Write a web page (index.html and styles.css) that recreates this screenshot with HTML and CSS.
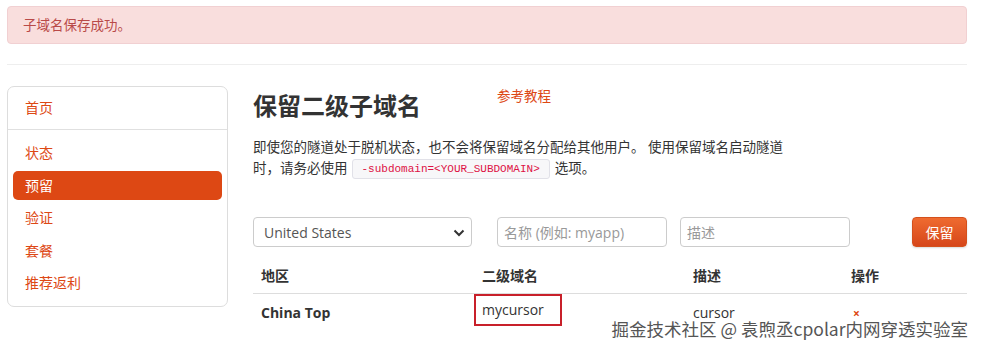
FILE: index.html
```html
<!DOCTYPE html>
<html lang="zh-CN">
<head>
  <meta charset="UTF-8" />
  <meta name="viewport" content="width=device-width, initial-scale=1.0"/>
  <title>保留二级子域名</title>
  <link rel="stylesheet" href="styles.css">
</head>
<body>
  <div class="container">
    <div class="alert">子域名保存成功。</div>
    <hr class="sep">

    <div class="layout">
      <ul class="sidenav">
        <li><a href="#">首页</a></li>
        <li class="divider"></li>
        <li><a href="#">状态</a></li>
        <li class="active"><a href="#">预留</a></li>
        <li><a href="#">验证</a></li>
        <li><a href="#">套餐</a></li>
        <li><a href="#">推荐返利</a></li>
      </ul>

      <div class="main">
        <div class="title-row">
          <h2>保留二级子域名</h2>
          <a class="help" href="#">参考教程</a>
        </div>
        <p class="intro">即使您的隧道处于脱机状态，也不会将保留域名分配给其他用户。 使用保留域名启动隧道时，请务必使用<code>-subdomain=&lt;YOUR_SUBDOMAIN&gt;</code>选项。</p>

        <form class="reserve" onsubmit="return false">
          <div class="select-wrap">
            <select>
              <option>United States</option>
              <option>China Top</option>
              <option>China VIP</option>
            </select>
            <svg class="chev" width="12" height="8" viewBox="0 0 12 8"><path d="M1.5 1.5 L6 6 L10.5 1.5" fill="none" stroke="#333" stroke-width="2"/></svg>
          </div>
          <input class="name" type="text" placeholder="名称 (例如: myapp)">
          <input class="desc" type="text" placeholder="描述">
          <button class="btn">保留</button>
        </form>

        <table class="list">
          <thead>
            <tr><th class="c1">地区</th><th class="c2">二级域名</th><th class="c3">描述</th><th class="c4">操作</th></tr>
          </thead>
          <tbody>
            <tr>
              <td class="region">China Top</td>
              <td class="mark"><span>mycursor</span></td>
              <td>cursor</td>
              <td><a class="del" href="#">×</a></td>
            </tr>
          </tbody>
        </table>
      </div>
    </div>
  </div>

  <div class="watermark">掘金技术社区 @ 袁煦丞cpolar内网穿透实验室</div>
</body>
</html>
```

FILE: styles.css
```css
body {
  margin: 0;
  padding-top: 6px;
  font-family: 'Open Sans', 'Noto Sans CJK SC', sans-serif;
  font-size: 14px;
  color: #333;
  background: white;
  position: relative;
  height: 347px;
  overflow: hidden;
}

.container {
  width: 960px;
  margin-left: 7px;
}

.alert {
  background-color: #f9dedd;
  border: 1px solid #f1d0d2;
  border-radius: 4px;
  color: #b94a48;
  padding: 8px 15px;
  height: 20px;
  line-height: 20px;
  font-size: 13.5px;
}

.sep {
  border: 0;
  border-top: 1px solid #eee;
  margin: 20px 0 21px;
}

.layout {
  display: flex;
}

.sidenav {
  list-style: none;
  margin: 0;
  padding: 6px 5px 7px;
  width: 209px;
  border: 1px solid #ddd;
  border-radius: 7px;
  height: 206px;
}

.sidenav li {
  margin-bottom: 3.5px;
}

.sidenav li a {
  display: block;
  padding: 0 12px;
  height: 29px;
  line-height: 29px;
  color: #dd4814;
  text-decoration: none;
  border-radius: 5px;
}

.sidenav li.active a {
  background-color: #dd4814;
  color: white;
}

.sidenav li.divider {
  height: 1px;
  background: #e0e0e0;
  margin: 7px -5px 8px;
}

.main {
  margin-left: 25px;
  width: 714px;
}

.title-row {
  display: flex;
  align-items: flex-start;
  height: 40px;
}

.title-row h2 {
  margin: 0;
  margin-top: 4px;
  font-size: 24px;
  line-height: 32px;
  font-weight: bold;
  color: #333;
}

.help {
  margin-left: 76px;
  color: #dd4814;
  text-decoration: none;
  font-size: 13.5px;
  line-height: 20px;
}

.intro {
  margin: 11px 0 0;
  width: 552px;
  line-height: 21px;
  font-size: 13.5px;
}

.intro code {
  display: inline-block;
  font-family: 'Liberation Mono', 'DejaVu Sans Mono', monospace;
  font-size: 11px;
  line-height: 16px;
  color: #d14;
  background: #f7f7f9;
  border: 1px solid #e1e1e8;
  border-radius: 3px;
  padding: 1px 9px 1px;
  margin: 0 5px 0 4px;
  vertical-align: 1px;
}

.reserve {
  display: flex;
  align-items: center;
  margin-top: 38px;
  height: 30px;
}

.select-wrap {
  position: relative;
  width: 219px;
}

.select-wrap select {
  appearance: none;
  -webkit-appearance: none;
  width: 100%;
  height: 30px;
  border: 1px solid #ccc;
  border-radius: 4px;
  background: white;
  padding: 0 10px;
  font-family: 'Open Sans', sans-serif;
  font-size: 14px;
  color: #555;
}

.chev {
  position: absolute;
  right: 7px;
  top: 12px;
  pointer-events: none;
}

.reserve input {
  height: 30px;
  box-sizing: border-box;
  border: 1px solid #ccc;
  border-radius: 4px;
  padding: 0 6px;
  font-family: 'Open Sans', 'Noto Sans CJK SC', sans-serif;
  font-size: 14px;
  width: 170px;
}

.reserve input::placeholder {
  color: #999;
}

.reserve .name {
  margin-left: 25px;
}

.reserve .desc {
  margin-left: 13px;
}

.btn {
  margin-left: auto;
  height: 30px;
  width: 55px;
  border: 1px solid #d4501c;
  border-radius: 4px;
  background: linear-gradient(#ef6b30, #d6461a);
  box-shadow: 0 1px 2px rgba(0, 0, 0, 0.15);
  color: white;
  font-family: 'Noto Sans CJK SC', sans-serif;
  font-size: 14px;
  cursor: pointer;
}

.list {
  width: 100%;
  border-collapse: collapse;
  margin-top: 10px;
}

.list th,
.list td {
  text-align: left;
  padding: 0 8px;
  vertical-align: middle;
}

.list th {
  height: 36px;
  border-bottom: 1px solid #ddd;
  font-weight: bold;
  font-family: 'Noto Sans CJK SC', sans-serif;
}

.list td {
  height: 36px;
}

.list .c1 { width: 205px; }
.list .c2 { width: 195px; }
.list .c3 { width: 142px; }

.list .region {
  font-weight: bold;
}

.list .mark {
  padding-left: 0;
  vertical-align: top;
}

.list .mark span {
  display: inline-block;
  border: 2px solid #c8202a;
  padding: 4px 16px 4px 6px;
  line-height: 20px;
}

.del {
  display: inline-block;
  line-height: 12px;
  color: #dd4814;
  text-decoration: none;
  font-size: 12px;
  font-weight: bold;
  margin-left: 2px;
}

.watermark {
  position: absolute;
  right: 13px;
  bottom: 14px;
  line-height: 20px;
  font-family: 'Noto Sans CJK SC', sans-serif;
  font-size: 17.5px;
  color: #555;
  text-shadow: 0 0 2px white, 0 0 2px white, 0 0 3px white;
}
```
